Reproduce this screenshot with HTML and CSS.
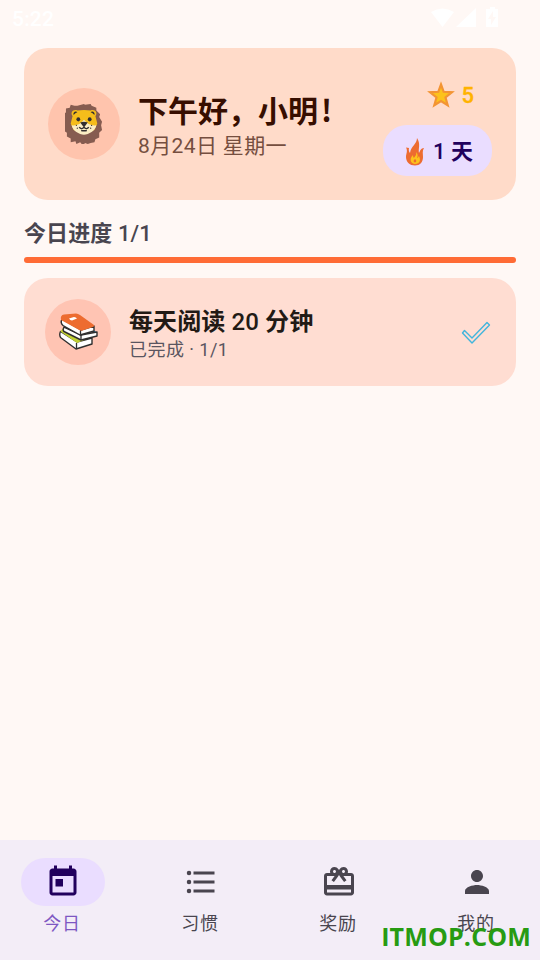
FILE: index.html
```html
<!DOCTYPE html>
<html lang="zh-CN">
<head>
<meta charset="utf-8">
<title>今日</title>
<link rel="stylesheet" href="styles.css">
</head>
<body>
<div class="app">
  <header class="status">
    <span class="clock">5:22</span>
    <svg class="status-icons" width="68" height="22" viewBox="0 0 68 22">
      <path d="M0 5Q11.500-2 23 5L11.500 20Z"/>
      <path d="M25 20L45 1V20Z"/>
      <path fill-rule="evenodd" d="M59 0h5v2h3v18H55V2h4zM62 4l-5 8h3v6l5-8h-3z"/>
    </svg>
  </header>
  <main>
    <section class="hero">
      <div class="avatar">
        <svg width="38" height="41" viewBox="0 0 40 44" preserveAspectRatio="none">
          <path fill="#865c50" d="M13 3L20 1l1 1 6-1 1 2 5 2v3l4 4-1 3 3 5-1 4 1 5-3 3v5l-4 2-1 3-4 1-3 1-3-1-2 3-3-4-4 2-1-3-5 1v-4l-4-2v-4l-4-3 1-4-2-4 2-4-1-4 3-3v-4l4-1 1-3 4 1z"/>
          <path fill="#f5bd1b" d="M8 14c-3-4 1-8 5-6q7-1 14 0c4-2 8 2 5 6l2 8-3 7q-11 5-22 0l-3-7z"/>
          <path fill="#fbedc4" d="M7 24q8 1 13-6 5 7 13 6c-1 6-8 10-13 10S8 30 7 24z"/>
          <g fill="#332f30"><path d="M9 13c-1-4 3-5 4-3l-2 1zM31 13c1-4-3-5-4-3l2 1zM16 21q4-2 8 0l-3 4h-2z"/><ellipse cx="14" cy="17.500" rx="2" ry="2.300"/><ellipse cx="26" cy="17.500" rx="2" ry="2.300"/><circle cx="12" cy="24" r=".7"/><circle cx="13" cy="27" r=".7"/><circle cx="28" cy="24" r=".7"/><circle cx="27" cy="27" r=".7"/></g>
          <path fill="none" stroke="#332f30" stroke-width="1.500" d="M20 23v3q-3 3-5 0M20 26q3 3 5 0M17 29.500q3 .5 6 0"/>
        </svg>
      </div>
      <div class="greeting">
        <h1>下午好，小明<span class="mark">!</span></h1>
        <p>8月24日 星期一</p>
      </div>
      <div class="stats">
        <div class="stars">
          <svg width="28" height="28" viewBox="0 0 28 28"><path fill="#fcc21b" stroke="#f39433" stroke-width="2.200" stroke-linejoin="miter" d="M14 3.500l2.700 7.300 8.300.5-6.500 5.200 2.200 7.800L14 20l-6.700 4.300 2.200-7.800L3 11.300l8.300-.5z"/></svg>
          <span>5</span>
        </div>
        <div class="streak">
          <svg width="20" height="28" viewBox="0 0 20 28"><path fill="#ed6c30" d="M12 0c0 6-6 8-7 15-1-1-1.500-3-1-5L1 9.500C3 13 1 16 1 19c0 5 4 8.500 9 8.500s8-3.500 8-8.500c0-3-1-6 1-9-3 0-4 3-5 5-1-4 2-9-2-15z"/><path fill="#fcc21b" d="M11 14c1 3-1 4-2 6-1-1-1-2-1-3-5 5-1 9 2 9 5 0 6-4 4-8-1 1-1 2-2 2 1-2 1-4-1-6z"/><path fill="#ed6c30" d="M10 21c-1 1-2 2-1 3s3 0 2-2z"/></svg>
          <span>1 <b>天</b></span>
        </div>
      </div>
    </section>
    <h2><b>今日进度</b> 1/1</h2>
    <div class="progress"></div>
    <section class="task">
      <div class="task-icon">
        <svg width="39" height="37" viewBox="0 0 39 37" stroke-linejoin="round">
          <path fill="#bfcf32" d="M2 18l4-4 27 15-15 2z"/>
          <path fill="#fff" stroke="#302f2f" stroke-width="1.400" d="M1.500 18.500q-1.500 3 0 6L17 36l16-5v-6l-15 4z"/>
          <path fill="#bfcf32" d="M1.500 18.500L5 14l20 13-7 3z"/>
          <path fill="none" stroke="#302f2f" stroke-width="1.300" d="M17.500 30v6"/>
          <path fill="#0878b5" d="M32 16l5.500 3v4h-4z"/>
          <path fill="#fff" stroke="#302f2f" stroke-width="1.400" d="M5 14q-2 4 1 5l16 8 16-4v-4l-16 3z"/>
          <path fill="none" stroke="#302f2f" stroke-width="1.300" d="M22 21v6"/>
          <path fill="#fff" stroke="#302f2f" stroke-width="1.400" d="M3 6q-2 4 1 6.500L21 22l14-4v-5l-13 4z"/>
          <path fill="#ed6c30" d="M2 7Q1 2 5 1.500L17 .5q2 0 4 1.500l14 10q1 1-1 2l-12 4z"/>
          <path fill="none" stroke="#302f2f" stroke-width="1.300" d="M21.500 17.500v4"/>
          <path fill="#fff" d="M10 5.500l5-1.500q2 0 3 1.500l-5 2q-2 0-3-2z"/>
        </svg>
      </div>
      <div class="task-text">
        <h3><b>每天阅读</b> 20 <b>分钟</b></h3>
        <p>已完成 · 1/1</p>
      </div>
      <svg class="check" width="30" height="24" viewBox="0 0 30 24"><path fill="none" stroke="#42b5dc" stroke-width="1.400" stroke-linejoin="round" d="M1.500 12L3.500 9.500 11 17 26 1.500 28.500 4 11 22Z"/></svg>
    </section>
  </main>
  <nav>
    <div class="tab active">
      <div class="pill"><svg width="36" height="36" viewBox="0 0 24 24"><path d="M19 3h-1V1h-2v2H8V1H6v2H5c-1.110 0-1.990.9-1.990 2L3 19c0 1.100.89 2 2 2h14c1.100 0 2-.9 2-2V5c0-1.100-.9-2-2-2zm0 16H5V8h14v11zM7 10h5v5H7z"/></svg></div>
      <span>今日</span>
    </div>
    <div class="tab">
      <div class="pill"><svg width="36" height="36" viewBox="0 0 24 24"><circle cx="4" cy="6" r="1.500"/><circle cx="4" cy="12" r="1.500"/><circle cx="4" cy="18" r="1.500"/><path d="M7 19h14v-2H7v2zm0-6h14v-2H7v2zm0-8v2h14V5H7z"/></svg></div>
      <span>习惯</span>
    </div>
    <div class="tab">
      <div class="pill"><svg width="36" height="36" viewBox="0 0 24 24"><path d="M20 6h-2.180c.11-.31.18-.65.18-1 0-1.660-1.340-3-3-3-1.050 0-1.960.54-2.500 1.350l-.5.67-.5-.68C10.960 2.540 10.050 2 9 2 7.340 2 6 3.340 6 5c0 .35.07.69.18 1H4c-1.110 0-1.990.89-1.990 2L2 19c0 1.110.89 2 2 2h16c1.110 0 2-.89 2-2V8c0-1.110-.89-2-2-2zm-5-2c.55 0 1 .45 1 1s-.45 1-1 1-1-.45-1-1 .45-1 1-1zM9 4c.55 0 1 .45 1 1s-.45 1-1 1-1-.45-1-1 .45-1 1-1zm11 15H4v-2h16v2zm0-5H4V8h5.080L7 10.830 8.620 12 11 8.760l1-1.360 1 1.360L15.380 12 17 10.830 14.920 8H20v6z"/></svg></div>
      <span>奖励</span>
    </div>
    <div class="tab">
      <div class="pill"><svg width="36" height="36" viewBox="0 0 24 24"><path d="M12 12c2.210 0 4-1.790 4-4s-1.790-4-4-4-4 1.790-4 4 1.790 4 4 4zm0 2c-2.670 0-8 1.340-8 4v2h16v-2c0-2.660-5.330-4-8-4z"/></svg></div>
      <span>我的</span>
    </div>
  </nav>
  <div class="watermark">ITMOP.COM</div>
</div>
</body>
</html>
```
FILE: styles.css
```css
* { box-sizing: border-box; }
body, h1, h2, h3, p { margin: 0; }
body { font-family: Roboto, "Noto Sans CJK SC", sans-serif; background: #fff8f5; }
svg { display: block; flex: none; }
b { font-weight: 700; }
.app { position: relative; width: 540px; height: 960px; display: flex; flex-direction: column; overflow: hidden; }
.status { height: 48px; padding: 7px 41px 0 12px; display: flex; justify-content: space-between; align-items: flex-start; color: #fff; }
.clock { font-size: 21px; line-height: 24px; font-weight: 500; letter-spacing: .2px; }
.status-icons { fill: #fff; }
main { flex: 1; padding: 0 24px; }
.hero { height: 152px; padding: 0 24px; border-radius: 24px; background: #ffdbc9; display: flex; align-items: center; }
.avatar { width: 72px; height: 72px; padding: 0 1px 2px 0; border-radius: 50%; background: #ffc4ad; display: flex; align-items: center; justify-content: center; }
.greeting { margin-left: 18px; padding-top: 3px; flex: 1; white-space: nowrap; }
h1 { font-family: "Noto Sans CJK SC", sans-serif; font-size: 30px; line-height: 39px; margin-bottom: 2px; font-weight: 700; color: #370e00; }
.mark { margin-left: 3px; }
.greeting p { font-size: 21px; line-height: 30px; letter-spacing: .375px; color: #754e3f; }
.stats { display: flex; flex-direction: column; align-items: flex-end; gap: 12px; padding-top: 5px; font-size: 22px; line-height: 33px; font-weight: 500; }
.stars { display: flex; align-items: center; gap: 6px; height: 36px; margin-right: 18px; color: #ffb300; -webkit-text-stroke: .3px #ffb300; }
.stars svg { margin-bottom: 1px; }
.streak { display: flex; align-items: center; gap: 8px; height: 51px; width: 109px; padding-left: 22px; border-radius: 24px; background: #eaddff; color: #21005d; }
.streak svg { margin-top: 3px; }
.streak span { margin-top: 2px; }
h2 { margin-top: 17px; height: 34px; font-size: 22px; line-height: 33px; font-weight: 500; letter-spacing: .1px; color: #49454f; }
.progress { margin-top: 6px; height: 6px; border-radius: 3px; background: #ff6b35; }
.task { margin-top: 15px; height: 108px; padding: 0 25px 0 21px; border-radius: 24px; background: #ffddd2; display: flex; align-items: center; }
.task-icon { width: 66px; height: 66px; padding-bottom: 1px; border-radius: 50%; background: #ffc4b3; display: flex; align-items: center; justify-content: center; }
.task-text { margin-left: 18px; padding-top: 3px; flex: 1; }
h3 { font-size: 24px; line-height: 32px; font-weight: 500; letter-spacing: .1px; color: #221a15; }
.task-text p { font-size: 18px; line-height: 24px; letter-spacing: .45px; color: #5a5560; }
.check { margin-top: 2px; }
nav { height: 120px; padding-top: 18px; display: flex; gap: 12px; background: #f3edf7; }
.tab { width: 126px; display: flex; flex-direction: column; align-items: center; gap: 6px; font-size: 18px; line-height: 24px; letter-spacing: .75px; color: #49454f; fill: #49454f; }
.tab span { margin-right: 2px; }
.pill { width: 84px; height: 48px; border-radius: 24px; display: flex; align-items: center; justify-content: center; }
.active { color: #7e57c2; fill: #21005d; }
.active .pill { background: #eaddff; }
.watermark { position: absolute; right: 9px; bottom: 7px; font: 700 25px/34px "Open Sans", sans-serif; letter-spacing: .15px; color: #279b12; }
```
